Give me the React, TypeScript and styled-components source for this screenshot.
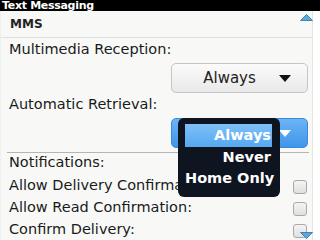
import React from "react";
import styled, { createGlobalStyle } from "styled-components";

const Global = createGlobalStyle`
  html, body { margin: 0; padding: 0; }
  body {
    width: 320px;
    height: 240px;
    overflow: hidden;
    background: #f7f8f6;
    font-family: "DejaVu Sans", "Liberation Sans", sans-serif;
  }
`;

const Screen = styled.div`
  width: 320px;
  height: 240px;
  display: flex;
  flex-direction: column;
  position: relative;
  overflow: hidden;
`;

const TitleBar = styled.div`
  height: 11px;
  background: #000;
  color: #fff;
  font-size: 11px;
  font-weight: bold;
  line-height: 11px;
  padding-left: 2px;
  letter-spacing: -0.3px;
`;

const Body = styled.div`
  flex: 1;
  display: flex;
  background: #fff;
`;

const Content = styled.div`
  width: 313px;
  background: #f8f9f7;
  border-right: 1px solid #e2e4e2;
  border-left: 1px solid #eef0ee;
  display: flex;
  flex-direction: column;
  padding: 0 3px 0 6px;
  box-sizing: border-box;
`;

const Section = styled.div`
  border-bottom: 1px solid #b4b6b4;
  display: flex;
  flex-direction: column;
`;

const Heading = styled.div`
  font-size: 12px;
  font-weight: bold;
  color: #222;
  height: 26px;
  line-height: 26px;
  border-bottom: 1px solid #dfe1df;
  margin: 0 -3px 0 -6px;
  padding-left: 9px;
`;

const Label = styled.div<{ $h?: number }>`
  font-size: 14.5px;
  color: #1a1a1a;
  height: ${(p) => p.$h ?? 22}px;
  line-height: ${(p) => p.$h ?? 22}px;
  padding-left: 2px;
  white-space: nowrap;
  overflow: hidden;
`;

const FieldRow = styled.div<{ $bottom?: number }>`
  display: flex;
  justify-content: flex-end;
  padding: 3px 0 ${(p) => p.$bottom ?? 1}px;
`;

const Dropdown = styled.div<{ $active?: boolean }>`
  width: 137px;
  height: 30px;
  box-sizing: border-box;
  border-radius: 5px;
  border: 1px solid ${(p) => (p.$active ? "#3b8ad8" : "#c4c6c4")};
  background: ${(p) =>
    p.$active
      ? "linear-gradient(#6cb4f6, #3f96ea)"
      : "linear-gradient(#fbfbfb, #e8e9e8)"};
  display: flex;
  align-items: center;
  color: ${(p) => (p.$active ? "#fff" : "#222")};
  font-size: 15px;
  margin-right: 1px;
`;

const DropText = styled.span`
  flex: 1;
  text-align: center;
  padding-left: 8px;
`;

const Caret = styled.span<{ $active?: boolean }>`
  width: 0;
  height: 0;
  border-left: 6px solid transparent;
  border-right: 6px solid transparent;
  border-top: 7px solid ${(p) => (p.$active ? "#fff" : "#111")};
  margin-right: 16px;
`;

const CheckList = styled.div`
  display: flex;
  flex-direction: column;
  padding-top: 3px;
`;

const CheckRow = styled.div`
  display: flex;
  align-items: center;
  justify-content: space-between;
  height: 22px;
`;

const Check = styled.span`
  width: 14px;
  height: 14px;
  box-sizing: border-box;
  border: 1px solid #a8aaa8;
  border-radius: 3px;
  background: linear-gradient(#f4f4f4, #dedfde);
  flex-shrink: 0;
  margin: 3px 2px 0 0;
`;

const Menu = styled.div`
  position: absolute;
  left: 178px;
  top: 118px;
  width: 102px;
  height: 79px;
  box-sizing: border-box;
  background: #0e1420;
  border-radius: 6px;
  padding: 6px 8px 0 7px;
  display: flex;
  flex-direction: column;
  align-items: stretch;
`;

const MenuItem = styled.div<{ $selected?: boolean }>`
  height: ${(p) => (p.$selected ? 23 : 21)}px;
  line-height: ${(p) => (p.$selected ? 23 : 21)}px;
  text-align: right;
  font-size: 14.5px;
  font-weight: bold;
  color: #fff;
  padding-right: 1px;
  background: ${(p) => (p.$selected ? "linear-gradient(#7fc0f8, #55a8f0)" : "transparent")};
  white-space: nowrap;
`;

const ScrollArrow = styled.svg<{ $top: number }>`
  position: absolute;
  right: 7px;
  top: ${(p) => p.$top}px;
`;

export default function App() {
  return (
    <>
      <Global />
      <Screen>
        <TitleBar>Text Messaging</TitleBar>
        <Body>
          <Content>
            <Heading>MMS</Heading>
            <Section>
              <Label>Multimedia Reception:</Label>
              <FieldRow>
                <Dropdown>
                  <DropText>Always</DropText>
                  <Caret />
                </Dropdown>
              </FieldRow>
              <Label $h={21}>Automatic Retrieval:</Label>
              <FieldRow $bottom={4}>
                <Dropdown $active>
                  <DropText>Always</DropText>
                  <Caret $active />
                </Dropdown>
              </FieldRow>
            </Section>
            <Label $h={18}>Notifications:</Label>
            <CheckList>
              <CheckRow>
                <Label>Allow Delivery Confirmation:</Label>
                <Check />
              </CheckRow>
              <CheckRow>
                <Label>Allow Read Confirmation:</Label>
                <Check />
              </CheckRow>
              <CheckRow>
                <Label>Confirm Delivery:</Label>
                <Check />
              </CheckRow>
            </CheckList>
          </Content>
        </Body>
        <Menu>
          <MenuItem $selected>Always</MenuItem>
          <MenuItem>Never</MenuItem>
          <MenuItem>Home Only</MenuItem>
        </Menu>
        <ScrollArrow $top={14} width="13" height="7" viewBox="0 0 13 7">
          <path d="M6.5 0.5 L12.5 6.5 L0.5 6.5 Z" fill="#5aa8e0" stroke="#2d6e9e" strokeWidth="0.8" />
        </ScrollArrow>
        <ScrollArrow $top={232} width="13" height="7" viewBox="0 0 13 7">
          <path d="M0.5 0.5 L12.5 0.5 L6.5 6.5 Z" fill="#5aa8e0" stroke="#2d6e9e" strokeWidth="0.8" />
        </ScrollArrow>
      </Screen>
    </>
  );
}
